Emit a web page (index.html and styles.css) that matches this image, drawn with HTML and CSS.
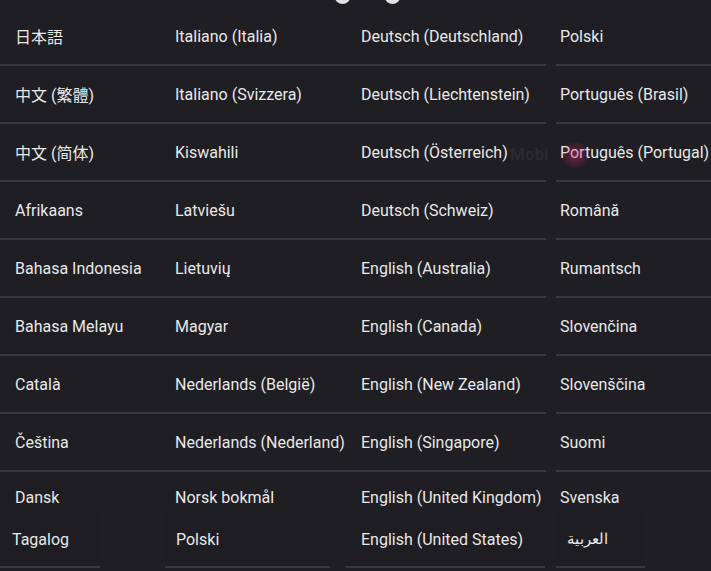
FILE: index.html
```html
<!DOCTYPE html>
<html lang="en">
<head>
    <meta charset="UTF-8">
    <meta name="viewport" content="width=device-width, initial-scale=1.0">
    <title>Language</title>
    <link rel="stylesheet" href="styles.css">
</head>
<body>
    <div class="pager">
        <span class="dot dot-a"></span>
        <span class="dot dot-b"></span>
    </div>

    <div class="lang-grid">
        <div class="cell">日本語</div>
        <div class="cell">Italiano (Italia)</div>
        <div class="cell">Deutsch (Deutschland)</div>
        <div class="cell last">Polski</div>

        <div class="cell">中文 (繁體)</div>
        <div class="cell">Italiano (Svizzera)</div>
        <div class="cell">Deutsch (Liechtenstein)</div>
        <div class="cell last">Português (Brasil)</div>

        <div class="cell">中文 (简体)</div>
        <div class="cell">Kiswahili</div>
        <div class="cell">Deutsch (Österreich)</div>
        <div class="cell last">Português (Portugal)</div>

        <div class="cell">Afrikaans</div>
        <div class="cell">Latviešu</div>
        <div class="cell">Deutsch (Schweiz)</div>
        <div class="cell last">Română</div>

        <div class="cell">Bahasa Indonesia</div>
        <div class="cell">Lietuvių</div>
        <div class="cell">English (Australia)</div>
        <div class="cell last">Rumantsch</div>

        <div class="cell">Bahasa Melayu</div>
        <div class="cell">Magyar</div>
        <div class="cell">English (Canada)</div>
        <div class="cell last">Slovenčina</div>

        <div class="cell">Català</div>
        <div class="cell">Nederlands (België)</div>
        <div class="cell">English (New Zealand)</div>
        <div class="cell last">Slovenščina</div>

        <div class="cell">Čeština</div>
        <div class="cell">Nederlands (Nederland)</div>
        <div class="cell">English (Singapore)</div>
        <div class="cell last">Suomi</div>

        <div class="cell cut">Dansk</div>
        <div class="cell cut">Norsk bokmål</div>
        <div class="cell cut">English (United Kingdom)</div>
        <div class="cell cut last">Svenska</div>
    </div>

    <div class="drag-row">
        <div class="ghost g1">Tagalog</div>
        <div class="ghost g2">Polski</div>
        <div class="ghost g3">English (United States)</div>
        <div class="ghost g4" dir="rtl">العربية</div>
    </div>

    <div class="mark">
        <span class="mark-text">Mobi</span>
        <span class="mark-glow"></span>
    </div>
</body>
</html>
```

FILE: styles.css
```css
body {
    margin: 0;
    background-color: #1f1e23;
    font-family: Roboto, "Noto Sans CJK JP", "Noto Sans", sans-serif;
    font-size: 16px;
    color: #e8e8e8;
    overflow: hidden;
    position: relative;
    height: 571px;
}

/* page dots peeking in at the top */
.pager {
    position: absolute;
    top: 0;
    left: 0;
    width: 100%;
}

.dot {
    position: absolute;
    top: -9px;
    width: 15px;
    height: 13px;
    border-radius: 50%;
    background-color: #e2e2e2;
}

.dot-a { left: 335px; }
.dot-b { left: 385px; }

.lang-grid {
    display: grid;
    grid-template-columns: 160px 186px 200px 1fr;
    grid-template-rows: repeat(8, 58px) 40px;
    padding-top: 8px;
}

.cell {
    display: flex;
    align-items: center;
    padding-left: 15px;
    border-bottom: 2px solid #38373d;
    white-space: nowrap;
}

.cell.last {
    margin-left: 10px;
    padding-left: 4px;
}

.cell.cut {
    border-bottom: none;
    align-items: flex-start;
    padding-top: 16px;
    box-sizing: border-box;
}

.drag-row {
    display: flex;
    height: 56px;
}

.ghost {
    display: flex;
    align-items: center;
    border-bottom: 2px solid #39383e;
    white-space: nowrap;
    background-color: #1e1d22;
}

.g1 { width: 88px; padding-left: 12px; }
.g2 { width: 154px; margin-left: 65px; padding-left: 11px; }
.g3 { width: 184px; margin-left: 16px; padding-left: 15px; }
.g4 { width: 78px; margin-left: 11px; padding-left: 11px; justify-content: flex-end; font-size: 15px; }

/* faint logo behind the third row */
.mark {
    position: absolute;
    top: 140px;
    left: 510px;
    width: 100px;
    height: 30px;
}

.mark-text {
    position: absolute;
    left: 0;
    top: 4px;
    font-size: 17px;
    font-weight: bold;
    color: #2a292f;
}

.mark-glow {
    position: absolute;
    left: 48px;
    top: 2px;
    width: 34px;
    height: 26px;
    border-radius: 50%;
    background: radial-gradient(circle, rgba(200, 40, 110, 0.5), rgba(200, 40, 110, 0) 70%);
}
```
